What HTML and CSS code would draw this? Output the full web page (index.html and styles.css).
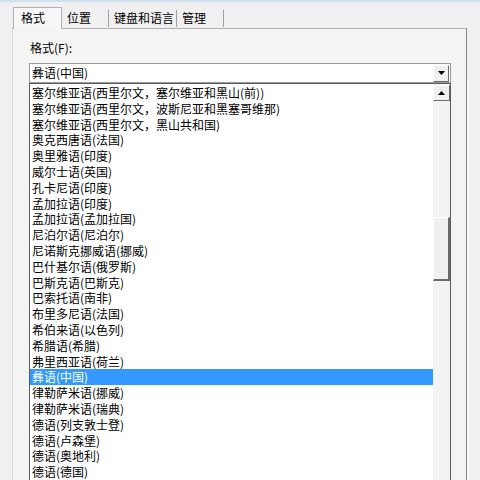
FILE: index.html
```html
<!DOCTYPE html>
<html lang="zh-CN">
<head>
<meta charset="utf-8">
<title>格式</title>
<link rel="stylesheet" href="styles.css">
</head>
<body>
<div class="window">
  <div class="tabs">
    <div class="tab active">格式</div>
    <div class="tab">位置</div>
    <div class="tab wide">键盘和语言</div>
    <div class="tab">管理</div>
  </div>
  <div class="body-row">
    <div class="panel">
      <div class="label">格式(F):</div>
      <div class="combo">
        <span class="combo-text">彝语(中国)</span>
        <span class="combo-btn"><svg width="7" height="4" viewBox="0 0 7 4"><path d="M0 0H7L3.5 4Z" fill="#000"/></svg></span>
      </div>
      <div class="list">
        <ul class="items">
          <li>塞尔维亚语(西里尔文，塞尔维亚和黑山(前))</li>
          <li>塞尔维亚语(西里尔文，波斯尼亚和黑塞哥维那)</li>
          <li>塞尔维亚语(西里尔文，黑山共和国)</li>
          <li>奥克西唐语(法国)</li>
          <li>奥里雅语(印度)</li>
          <li>威尔士语(英国)</li>
          <li>孔卡尼语(印度)</li>
          <li>孟加拉语(印度)</li>
          <li>孟加拉语(孟加拉国)</li>
          <li>尼泊尔语(尼泊尔)</li>
          <li>尼诺斯克挪威语(挪威)</li>
          <li>巴什基尔语(俄罗斯)</li>
          <li>巴斯克语(巴斯克)</li>
          <li>巴索托语(南非)</li>
          <li>布里多尼语(法国)</li>
          <li>希伯来语(以色列)</li>
          <li>希腊语(希腊)</li>
          <li>弗里西亚语(荷兰)</li>
          <li class="selected">彝语(中国)</li>
          <li>律勒萨米语(挪威)</li>
          <li>律勒萨米语(瑞典)</li>
          <li>德语(列支敦士登)</li>
          <li>德语(卢森堡)</li>
          <li>德语(奥地利)</li>
          <li>德语(德国)</li>
        </ul>
        <div class="scrollbar">
          <div class="sb-btn"><svg width="7" height="4" viewBox="0 0 7 4"><path d="M0 4H7L3.5 0Z" fill="#000"/></svg></div>
          <div class="sb-gap"></div>
          <div class="sb-thumb"></div>
          <div class="sb-rest"></div>
        </div>
      </div>
    </div>
    <div class="edge"></div>
  </div>
</div>
</body>
</html>
```
FILE: styles.css
```css
html, body {
  margin: 0;
  padding: 0;
}
body {
  width: 480px;
  height: 480px;
  overflow: hidden;
  background: #f0f0f0;
  font-family: "Noto Sans CJK SC", "Microsoft YaHei", sans-serif;
  font-size: 12px;
  color: #000;
}
.window {
  height: 478px;
  border-top: 2px solid #cfdff0;
  display: flex;
  flex-direction: column;
}
.tabs {
  display: flex;
  align-items: flex-end;
  height: 26px;
  padding-left: 13px;
  position: relative;
  z-index: 1;
  flex: none;
}
.tab {
  box-sizing: border-box;
  width: 47px;
  height: 17px;
  line-height: 16px;
  padding-left: 5px;
  border-right: 1px solid #a0a0a0;
  margin-bottom: 1px;
  white-space: nowrap;
}
.tab.wide {
  width: 68px;
}
.tab.active {
  width: 49px;
  height: 22px;
  line-height: 20px;
  padding-left: 7px;
  margin-bottom: -1px;
  background: #f7f7f7;
  border: 1px solid #b0b0b0;
  border-bottom: none;
}
.body-row {
  display: flex;
  flex: 1;
  min-height: 0;
}
.panel {
  margin-left: 12px;
  width: 437px;
  border-top: 1px solid #b0b0b0;
  border-left: 1px solid #dcdcdc;
  border-right: 1px solid #8a8a8a;
  background: #f4f4f4;
  padding: 11px 0 0 16px;
  display: flex;
  flex-direction: column;
  min-height: 0;
}
.edge {
  width: 1px;
  margin-left: 1px;
  margin-top: 52px;
  background: #ffffff;
}
.label {
  height: 16px;
  line-height: 16px;
  padding-left: 1px;
  flex: none;
}
.combo {
  flex: none;
  margin-top: 7px;
  width: 420px;
  height: 18px;
  border: 1px solid #9a9a9a;
  background: #fff;
  display: flex;
  align-items: center;
  justify-content: space-between;
}
.combo-text {
  padding-left: 2px;
  line-height: 18px;
}
.combo-btn, .sb-btn {
  width: 14px;
  height: 15px;
  margin-right: 1px;
  background: #f0f0f0;
  border-top: 1px solid #fff;
  border-left: 1px solid #fff;
  border-right: 1px solid #6a6a6a;
  border-bottom: 1px solid #6a6a6a;
  display: flex;
  align-items: center;
  justify-content: center;
}
.list {
  flex: 1;
  min-height: 0;
  width: 420px;
  border: 1px solid #5a5a5a;
  border-bottom: none;
  background: #fff;
  display: flex;
  overflow: hidden;
}
.items {
  list-style: none;
  margin: 0;
  padding: 1px 0 0 0;
  flex: 1;
}
.items li {
  height: 15.8px;
  line-height: 15.8px;
  padding-left: 2px;
  white-space: nowrap;
}
.items li.selected {
  background: #3399ff;
  color: #fff;
}
.scrollbar {
  width: 17px;
  display: flex;
  flex-direction: column;
  background: #f3f3f3;
}
.sb-btn {
  flex: none;
  margin: 1px 0 0 0;
  width: 15px;
  height: 14px;
}
.sb-gap {
  flex: none;
  height: 116px;
}
.sb-thumb {
  flex: none;
  height: 61px;
  width: 14px;
  background: #f0f0f0;
  border-top: 1px solid #fff;
  border-left: 1px solid #fff;
  border-right: 2px solid #6a6a6a;
  border-bottom: 2px solid #6a6a6a;
  box-sizing: content-box;
}
.sb-rest {
  flex: 1;
}
```
